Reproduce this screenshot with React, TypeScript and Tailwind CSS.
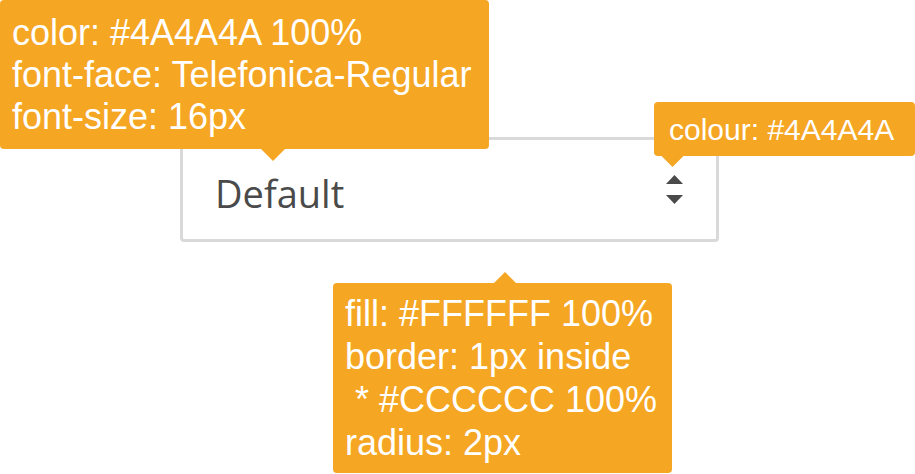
import React from 'react';

const orange = 'bg-[#F5A623]';

function ArrowDown({ className }: { className: string }) {
  return (
    <svg className={className} width="24" height="12" viewBox="0 0 24 12">
      <polygon points="0,0 24,0 12,12" fill="#F5A623" />
    </svg>
  );
}

function ArrowUp({ className }: { className: string }) {
  return (
    <svg className={className} width="24" height="12" viewBox="0 0 24 12">
      <polygon points="0,12 24,12 12,0" fill="#F5A623" />
    </svg>
  );
}

function SortIcon() {
  return (
    <svg width="17" height="29" viewBox="0 0 17 29" className="shrink-0">
      <polygon points="0,9 8.5,0 17,9" fill="#4A4A4A" />
      <polygon points="0,20 17,20 8.5,29" fill="#4A4A4A" />
    </svg>
  );
}

export default function App() {
  return (
    <div className="relative w-[915px] h-[474px] overflow-hidden bg-white pl-[180px] pt-[137px]">
      {/* the select being annotated */}
      <div className="flex items-center justify-between w-[539px] h-[105px] bg-white border-[3px] border-[#d9d9d9] rounded-[4px] pl-[32px] pr-[33px]">
        <span
          className="pt-[6px] text-[38px] leading-none text-[#4A4A4A]"
          style={{ fontFamily: '"Open Sans", "Noto Sans", sans-serif' }}
        >
          Default
        </span>
        <SortIcon />
      </div>

      {/* annotation: text */}
      <div
        className={`absolute left-0 top-0 w-[489px] h-[149px] ${orange} rounded-[4px] pl-[12px] pt-[12px] text-white text-[36px] leading-[42px]`}
        style={{ fontFamily: '"Liberation Sans", Arial, sans-serif' }}
      >
        <div>color: #4A4A4A 100%</div>
        <div>font-face: Telefonica-Regular</div>
        <div>font-size: 16px</div>
        <ArrowDown className="absolute left-[261px] top-[149px]" />
      </div>

      {/* annotation: icon */}
      <div
        className={`absolute left-[654px] top-[102px] w-[261px] h-[54px] ${orange} rounded-[4px] pl-[15px] pt-[10px] text-white text-[30px] leading-[36px]`}
        style={{ fontFamily: '"Liberation Sans", Arial, sans-serif' }}
      >
        colour: #4A4A4A
        <ArrowDown className="absolute left-[7px] top-[54px] w-[23px] h-[11px]" />
      </div>

      {/* annotation: box */}
      <div
        className={`absolute left-[333px] top-[283px] w-[339px] h-[190px] ${orange} rounded-[4px] pl-[12px] pt-[9px] text-white text-[36px] leading-[43px]`}
        style={{ fontFamily: '"Liberation Sans", Arial, sans-serif' }}
      >
        <ArrowUp className="absolute left-[160px] top-[-11px] w-[24px] h-[11px]" />
        <div>fill: #FFFFFF 100%</div>
        <div>border: 1px inside</div>
        <div className="whitespace-pre"> * #CCCCCC 100%</div>
        <div>radius: 2px</div>
      </div>
    </div>
  );
}
